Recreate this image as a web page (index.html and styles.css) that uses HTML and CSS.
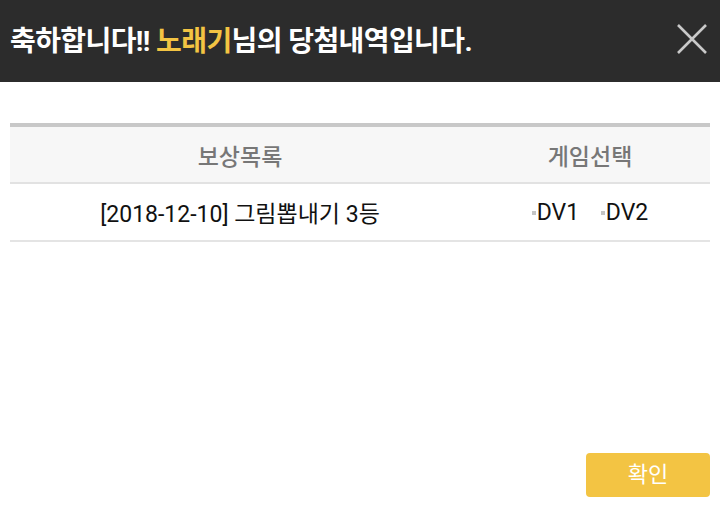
FILE: index.html
```html
<!DOCTYPE html>
<html>
<head lang="ko">
    <meta charset="utf-8">
    <title>당첨내역</title>
    <link rel="stylesheet" href="styles.css">
</head>
<body>

<div class="popup">
    <div class="popup-head">
        <h1>축하합니다!! <span class="nick">노래기</span>님의 당첨내역입니다.</h1>
        <a href="#" class="close" aria-label="닫기">
            <svg width="32" height="32" viewBox="0 0 32 32">
                <path d="M2 2 L30 30 M30 2 L2 30" stroke="#c9c9c9" stroke-width="2.6" fill="none"/>
            </svg>
        </a>
    </div>

    <div class="popup-body">
        <table class="prize">
            <thead>
                <tr>
                    <th class="col-name">보상목록</th>
                    <th class="col-game">게임선택</th>
                </tr>
            </thead>
            <tbody>
                <tr>
                    <td>[2018-12-10] 그림뽑내기 3등</td>
                    <td class="games">
                        <label><span class="chk"></span>DV1</label>
                        <label><span class="chk"></span>DV2</label>
                    </td>
                </tr>
            </tbody>
        </table>
    </div>

    <div class="popup-foot">
        <a href="#" class="btn-ok">확인</a>
    </div>
</div>

</body>
</html>
```

FILE: styles.css
```css
* { box-sizing: border-box; }

html, body {
    margin: 0;
    padding: 0;
    height: 100%;
}

body {
    font-family: Roboto, "Noto Sans CJK KR", sans-serif;
    background: #fff;
    color: #111;
}

.popup {
    display: flex;
    flex-direction: column;
    height: 523px;
}

.popup-head {
    display: flex;
    align-items: center;
    justify-content: space-between;
    height: 82px;
    padding: 0 12px 0 10px;
    background: #2c2c2c;
}

.popup-head h1 {
    margin: 0 0 4px;
    font-size: 28px;
    font-weight: bold;
    color: #fff;
    letter-spacing: -0.6px;
}

.nick { color: #f3c443; }

.close {
    display: block;
    width: 32px;
    height: 32px;
    margin-bottom: 4px;
}

.close svg { display: block; }

.popup-body {
    flex: 1;
    padding: 41px 10px 0;
}

.prize {
    width: 100%;
    border-collapse: collapse;
    border-top: 4px solid #c8c8c8;
}

.prize th {
    height: 58px;
    background: #f7f7f7;
    color: #777;
    font-size: 23px;
    font-weight: 500;
    border-bottom: 2px solid #e2e2e2;
}

.prize td {
    height: 58px;
    text-align: center;
    font-size: 23px;
    border-bottom: 2px solid #e4e4e4;
}

.col-name { width: 460px; }

.games label {
    display: inline-block;
    margin: 0 8px;
}

.chk {
    display: inline-block;
    width: 4px;
    height: 4px;
    margin-right: 1px;
    vertical-align: middle;
    background: #c4c4c4;
}

.popup-foot {
    display: flex;
    justify-content: flex-end;
    padding: 0 10px 26px;
}

.btn-ok {
    display: block;
    width: 124px;
    height: 44px;
    line-height: 44px;
    text-align: center;
    background: #f3c443;
    border-radius: 4px;
    color: #fff;
    font-size: 22px;
    text-decoration: none;
}
```
